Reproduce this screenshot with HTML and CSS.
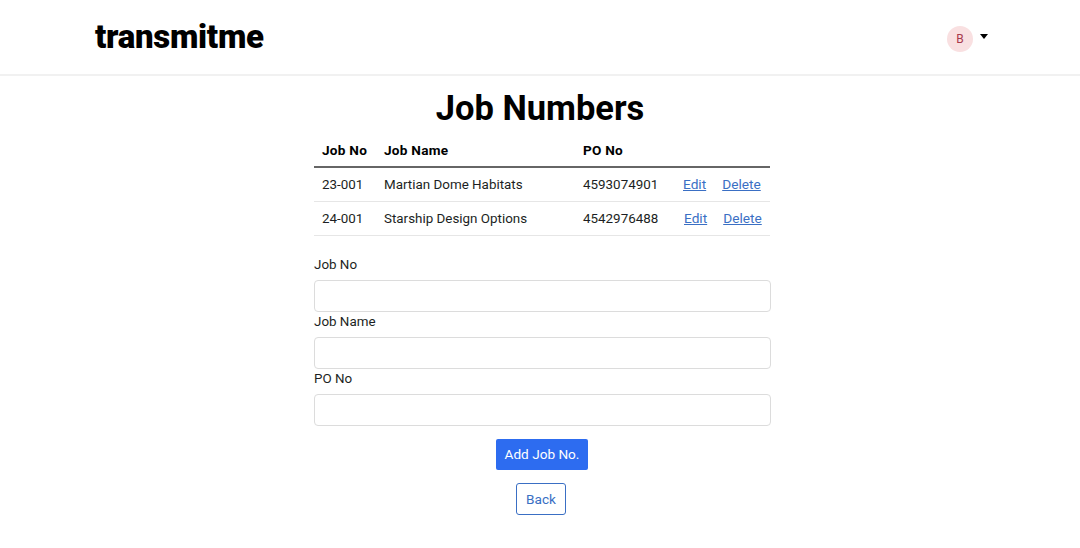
FILE: index.html
```html
<!DOCTYPE html>
<html lang="en">
<head>
<meta charset="utf-8">
<title>Job Numbers</title>
<link rel="stylesheet" href="styles.css">
</head>
<body>
<header class="navbar">
  <div class="brand">transmitme</div>
  <div class="user">
    <span class="avatar">B</span>
    <span class="caret"></span>
  </div>
</header>
<main class="page">
  <h1 class="title">Job Numbers</h1>
  <table class="jobs">
    <thead>
      <tr><th class="c-no">Job No</th><th class="c-name">Job Name</th><th class="c-po">PO No</th><th class="c-act"></th></tr>
    </thead>
    <tbody>
      <tr><td>23-001</td><td>Martian Dome Habitats</td><td>4593074901</td><td class="actions"><a href="#">Edit</a><a href="#">Delete</a></td></tr>
      <tr><td>24-001</td><td>Starship Design Options</td><td>4542976488</td><td class="actions actions-alt"><a href="#">Edit</a><a href="#">Delete</a></td></tr>
    </tbody>
  </table>
  <form class="form">
    <label class="field"><span class="field-label">Job No</span><input class="input" type="text"></label>
    <label class="field"><span class="field-label">Job Name</span><input class="input" type="text"></label>
    <label class="field"><span class="field-label">PO No</span><input class="input" type="text"></label>
    <button class="btn-primary" type="button">Add Job No.</button>
    <button class="btn-outline" type="button">Back</button>
  </form>
</main>
</body>
</html>
```
FILE: styles.css
```css
* { box-sizing: border-box; }
html, body { margin: 0; padding: 0; }
body {
  background: #fff;
  color: #212529;
  font-family: Roboto, "Liberation Sans", sans-serif;
  font-size: 13.4px;
}
.navbar {
  height: 76px;
  border-bottom: 2px solid #f1f1f1;
  display: flex;
  align-items: center;
  justify-content: space-between;
  padding: 0 92px 0 95px;
}
.brand {
  font-size: 33px;
  font-weight: 900;
  color: #000;
  letter-spacing: -0.3px;
  line-height: 40px;
}
.user { display: flex; align-items: flex-start; gap: 7px; margin-top: 4px; }
.avatar {
  width: 26px;
  height: 26px;
  border-radius: 50%;
  background: #f9e0e1;
  color: #a83a4c;
  font-size: 12px;
  display: flex;
  align-items: center;
  justify-content: center;
}
.caret {
  width: 0;
  height: 0;
  margin-top: 8px;
  border-left: 4px solid transparent;
  border-right: 4px solid transparent;
  border-top: 5px solid #000;
}
.page {
  width: 456px;
  margin-left: 314px;
  display: flex;
  flex-direction: column;
}
.title {
  margin: 12px 0 0;
  padding-right: 4px;
  font-size: 34.5px;
  line-height: 40px;
  font-weight: 700;
  color: #000;
  text-align: center;
}
.jobs {
  width: 456px;
  margin-top: 3px;
  border-collapse: collapse;
  table-layout: fixed;
}
.jobs th {
  height: 36px;
  padding: 2px 8px 0;
  text-align: left;
  font-size: 13.6px;
  letter-spacing: 0.25px;
  font-weight: 700;
  color: #000;
  border-bottom: 2px solid #666;
}
.jobs td {
  height: 34px;
  padding: 0 8px;
  color: #1c1f23;
  border-bottom: 1px solid #e6e6e6;
}
.c-no { width: 62px; }
.c-name { width: 199px; }
.c-po { width: 100px; }
.actions { white-space: nowrap; font-size: 13.7px; }
.actions-alt { padding-left: 9px !important; }
.actions a { color: #3a6fc4; text-decoration: underline; }
.actions a + a { margin-left: 16px; }
.form { display: flex; flex-direction: column; margin-top: 19px; }
.field { display: flex; flex-direction: column; }
.field-label {
  height: 25px;
  line-height: 20px;
  color: #1c1f23;
}
.input {
  width: 457px;
  height: 32px;
  border: 1px solid #dcdcdc;
  border-radius: 4px;
  background: #fff;
}
.btn-primary {
  align-self: center;
  margin-top: 13px;
  width: 92px;
  height: 31px;
  border: 0;
  border-radius: 2px;
  background: #2d6cf0;
  color: #fff;
  font: 13.6px Roboto, "Liberation Sans", sans-serif;
  padding: 0;
}
.btn-outline {
  align-self: center;
  margin-top: 13px;
  margin-right: 2px;
  width: 50px;
  height: 32px;
  border: 1px solid #3a6fc4;
  border-radius: 3px;
  background: #fff;
  color: #3a6fc4;
  font: 13.6px Roboto, "Liberation Sans", sans-serif;
  padding: 0;
}
```
